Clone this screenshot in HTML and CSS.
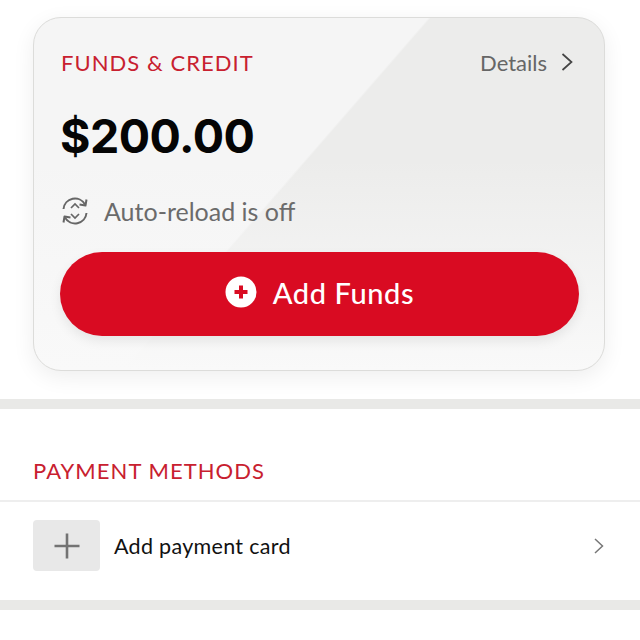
FILE: index.html
```html
<!DOCTYPE html>
<html lang="en">
<head>
    <meta charset="UTF-8">
    <meta name="viewport" content="width=device-width, initial-scale=1.0">
    <title>Funds and Credit</title>
    <link rel="stylesheet" href="styles.css">
</head>
<body>
    <section class="funds">
        <div class="card">
            <div class="card-head">
                <h2 class="label">FUNDS &amp; CREDIT</h2>
                <a class="details">Details
                    <svg width="14" height="20" viewBox="0 0 14 20"><path d="M2.5 2l9 8-9 8" fill="none" stroke="#444" stroke-width="1.7"/></svg>
                </a>
            </div>
            <div class="amount">$200.00</div>
            <div class="auto">
                <svg width="30" height="30" viewBox="0 0 30 30" fill="none" stroke="#666" stroke-width="2">
                    <path d="M3.5 13A11.5 11.5 0 0 1 25 8.5"/>
                    <path d="M26.5 3.5l-1 6-6-1" stroke-linejoin="round"/>
                    <path d="M26.5 17A11.5 11.5 0 0 1 5 21.5"/>
                    <path d="M3.5 26.5l1-6 6 1" stroke-linejoin="round"/>
                    <path d="M11 12l4-4 4 4M11 18l4 4 4-4" stroke-width="1.7"/>
                </svg>
                <span>Auto-reload is off</span>
            </div>
            <button type="button" class="add-funds">
                <svg width="32" height="32" viewBox="0 0 32 32">
                    <circle cx="16" cy="16" r="15.5" fill="#fff"/>
                    <path d="M16 9.5v13M9.5 16h13" stroke="#d90b22" stroke-width="4"/>
                </svg>
                Add Funds
            </button>
        </div>
    </section>

    <div class="band"></div>

    <section class="methods">
        <h2 class="label methods-title">PAYMENT METHODS</h2>
        <div class="row">
            <div class="tile">
                <svg width="26" height="26" viewBox="0 0 26 26"><path d="M13 0.5v25M0.5 13h25" stroke="#737373" stroke-width="2.6"/></svg>
            </div>
            <span class="row-text">Add payment card</span>
            <svg class="row-arrow" width="12" height="18" viewBox="0 0 12 18"><path d="M2 2l7.5 7L2 16" fill="none" stroke="#777" stroke-width="1.5"/></svg>
        </div>
    </section>

    <div class="band"></div>
</body>
</html>
```

FILE: styles.css
```css
body {
    margin: 0;
    background-color: #fff;
    font-family: Lato, "Noto Sans", sans-serif;
}
.funds {
    padding: 17px 35px 28px 33px;
}
.card {
    height: 354px;
    box-sizing: border-box;
    padding: 26px 26px 0;
    border: 1px solid #dcdcda;
    border-radius: 28px;
    background-color: #f8f8f8;
    background-image:
        linear-gradient(180deg, rgba(249, 249, 249, 0) 40%, #f9f9f9 100%),
        linear-gradient(131deg, #f5f5f5 45%, #ececeb 45.3%);
    box-shadow: 0 6px 22px rgba(0, 0, 0, 0.07);
}
.card-head {
    display: flex;
    justify-content: space-between;
    align-items: center;
    height: 36px;
}
.label {
    margin: 0;
    padding-left: 1px;
    font-size: 22px;
    font-weight: 400;
    letter-spacing: 1.05px;
    color: #c8202f;
}
.details {
    display: flex;
    align-items: center;
    gap: 13px;
    padding-right: 4px;
    font-size: 22px;
    color: #666;
}
.amount {
    margin-top: 26px;
    font-family: Inter, Roboto, sans-serif;
    font-size: 46.5px;
    font-weight: 700;
    line-height: 60px;
    letter-spacing: -0.5px;
    color: #050505;
}
.auto {
    display: flex;
    align-items: center;
    gap: 14px;
    margin-top: 30px;
    font-size: 25px;
    color: #6b6b6b;
}
.add-funds {
    display: flex;
    justify-content: center;
    align-items: center;
    gap: 16px;
    width: 519px;
    height: 84px;
    margin-top: 26px;
    padding: 0 0 4px;
    border: none;
    border-radius: 42px;
    background-color: #d90b22;
    color: #fff;
    font-family: inherit;
    font-size: 29px;
    font-weight: 500;
    letter-spacing: 0.6px;
    box-shadow: 0 5px 12px rgba(0, 0, 0, 0.08);
}
.band {
    height: 10px;
    background-color: #e9e9e7;
}
.methods-title {
    padding: 48px 0 16px 33px;
    border-bottom: 2px solid #eeeeee;
    line-height: 27px;
    font-size: 22px;
    letter-spacing: 1.05px;
}
.row {
    display: flex;
    align-items: flex-start;
    height: 98px;
    padding: 18px 35px 0 33px;
    box-sizing: border-box;
}
.tile {
    display: flex;
    justify-content: center;
    align-items: center;
    width: 67px;
    height: 51px;
    margin-right: 14px;
    border-radius: 4px;
    background-color: #e8e8e8;
}
.row-text {
    flex: 1;
    font-size: 21.5px;
    line-height: 53px;
    letter-spacing: 0.3px;
    color: #111;
}
.row-arrow {
    margin-top: 17px;
}
```
